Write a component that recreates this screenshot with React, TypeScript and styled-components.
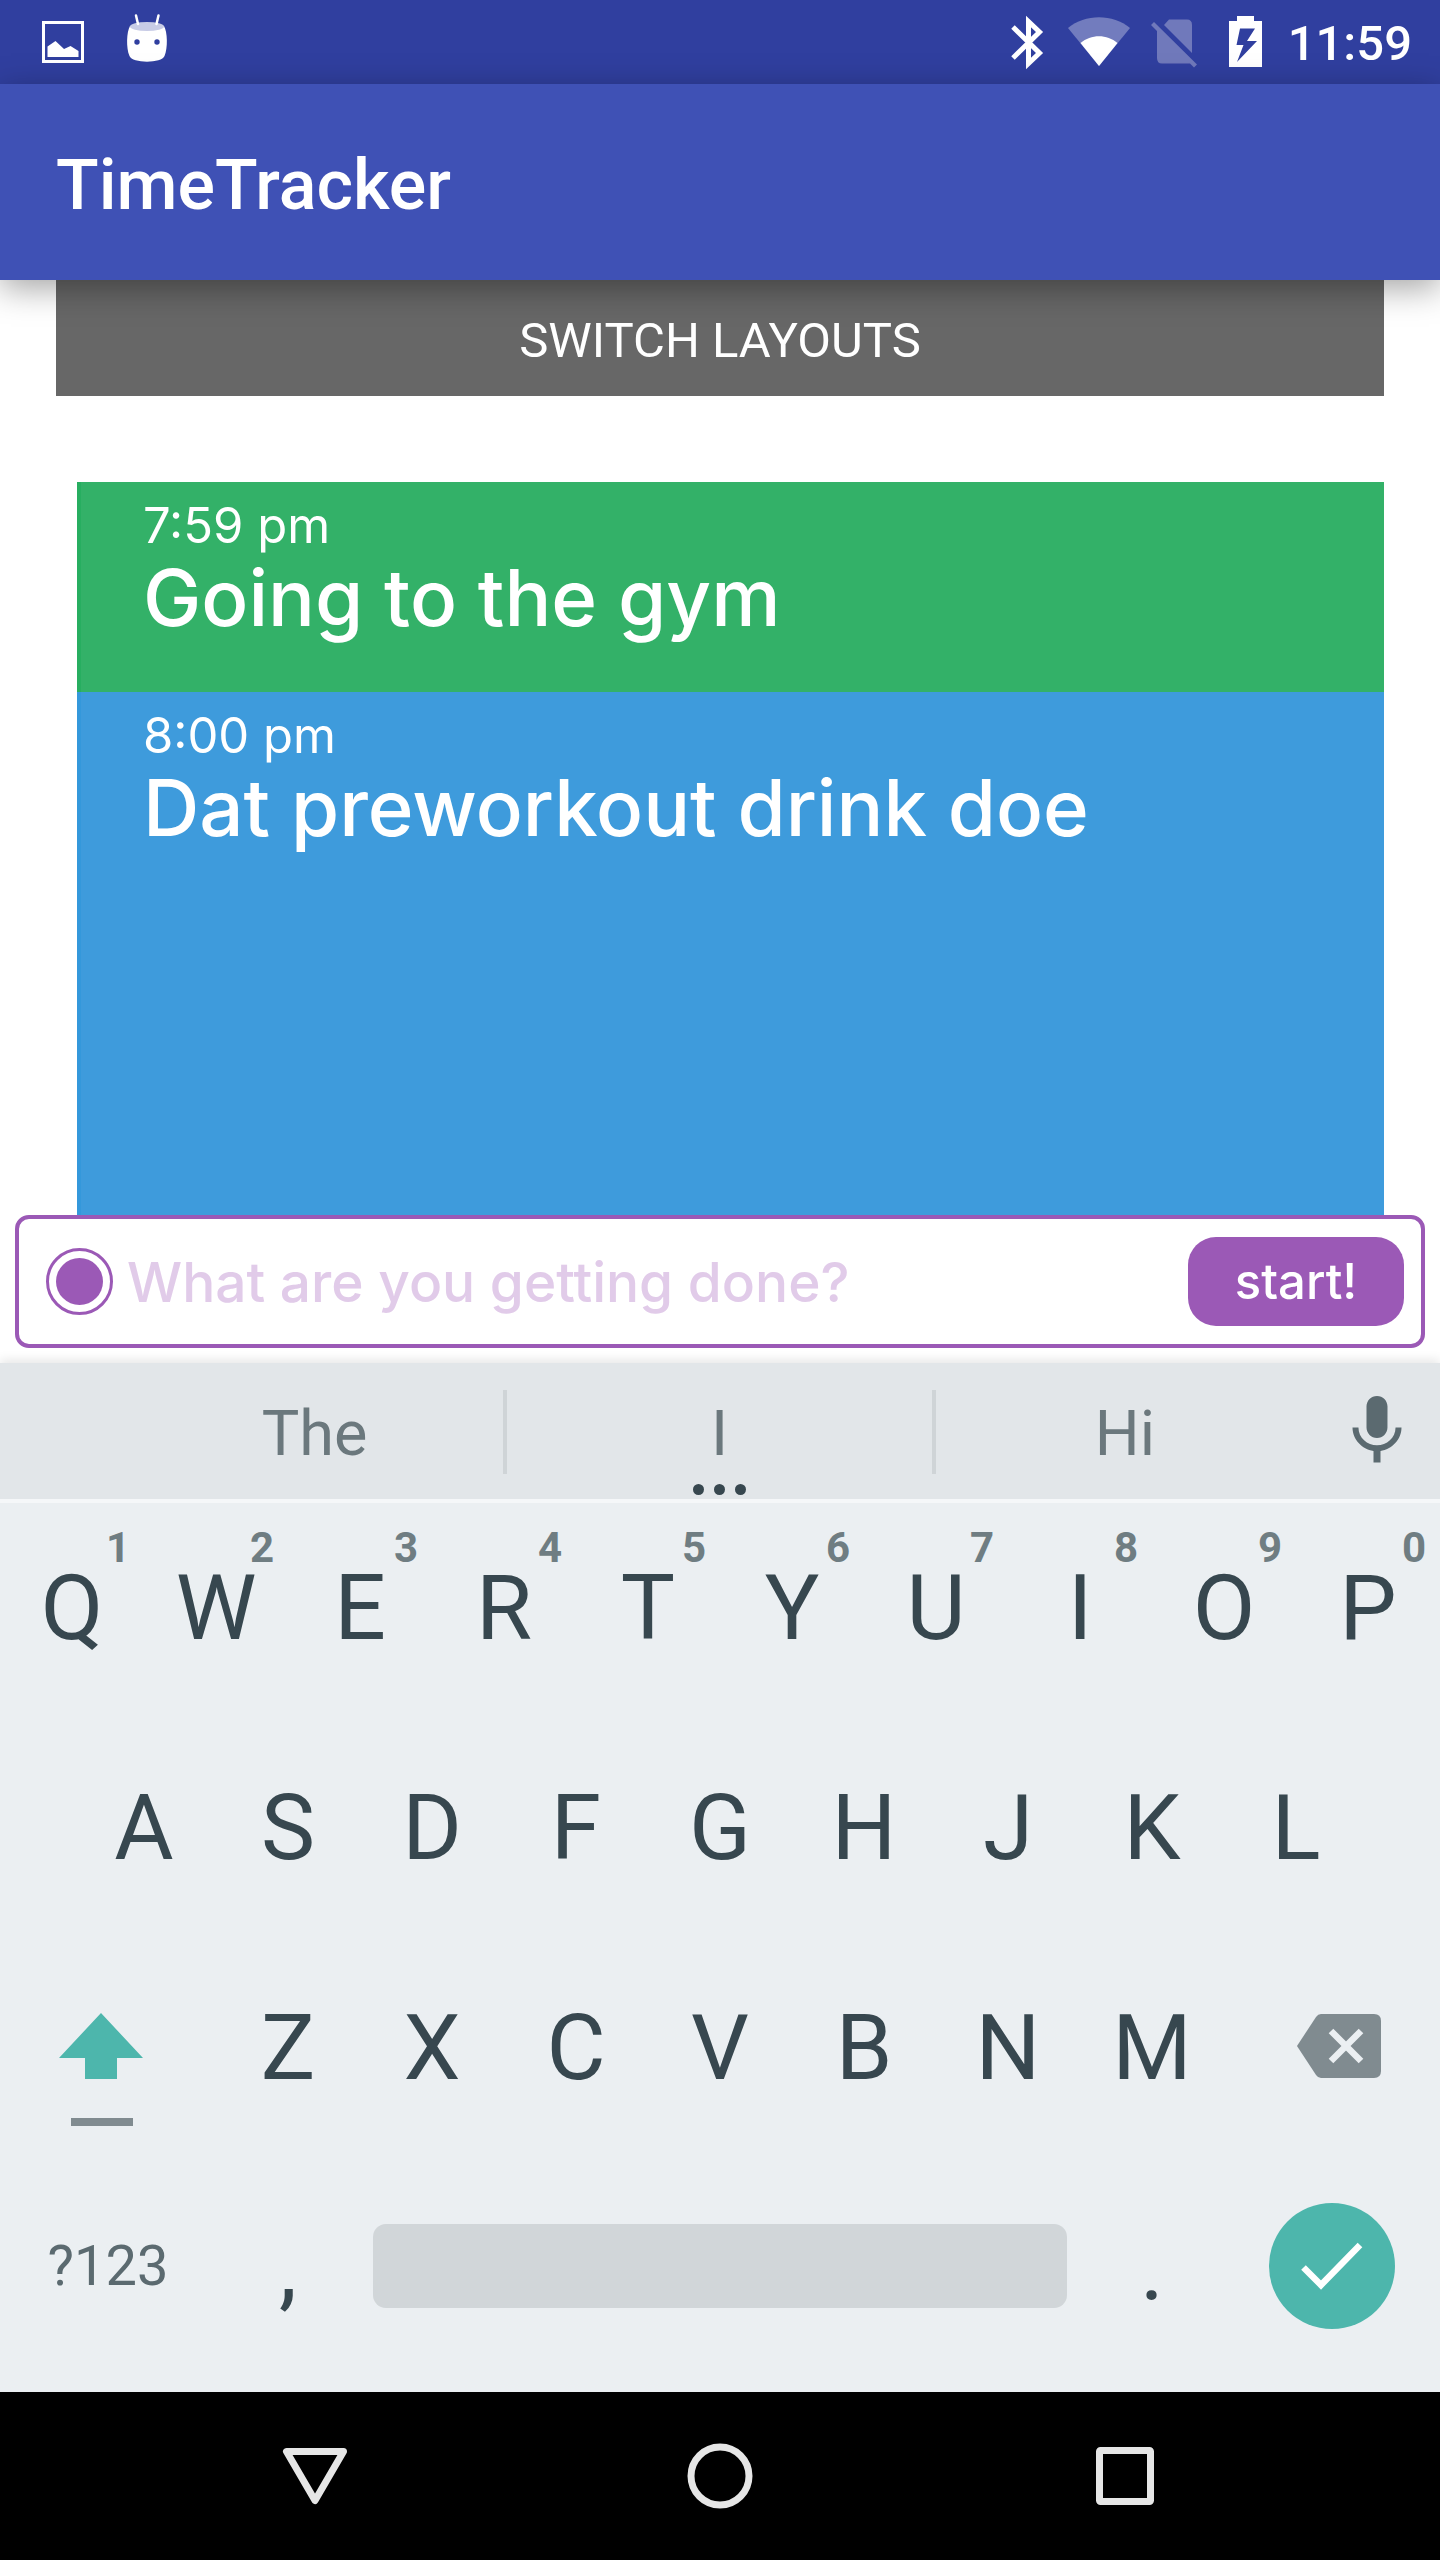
import React from "react";
import styled, { createGlobalStyle } from "styled-components";

const GlobalStyle = createGlobalStyle`
  *, *::before, *::after { box-sizing: border-box; }
  body { margin: 0; background: #fff; }
  button, input { font: inherit; border: 0; margin: 0; padding: 0; background: none; }
  button { cursor: pointer; }
  svg { display: block; flex: none; }
`;

const Screen = styled.div`
  display: flex;
  flex-direction: column;
  min-height: 100vh;
  overflow: hidden;
  font-family: Roboto, sans-serif;
`;

const StatusBar = styled.div`
  display: flex;
  justify-content: space-between;
  height: 84px;
  padding: 0 28px 0 21px;
  background: #303f9f;
  color: #fff;
`;

const StatusGroup = styled.div`
  display: flex;
  align-items: center;
`;

const Clock = styled.time`
  padding-top: 4px;
  margin-left: 6px;
  font-size: 49px;
  font-weight: 500;
  line-height: 80px;
`;

const AppBar = styled.header`
  position: relative;
  z-index: 1;
  display: flex;
  align-items: center;
  height: 196px;
  padding: 0 56px;
  background: #3f51b5;
  box-shadow: 0 8px 32px rgba(0, 0, 0, 0.36);
`;

const AppTitle = styled.h1`
  margin: 0;
  padding-top: 6px;
  color: #fff;
  font-size: 70px;
  font-weight: 500;
  line-height: 84px;
`;

const Content = styled.main`
  display: flex;
  flex: 1;
  flex-direction: column;
  padding: 0 56px;
`;

const SwitchButton = styled.button`
  height: 116px;
  padding-top: 4px;
  background: #676767;
  color: #fff;
  font-size: 49px;
  text-transform: uppercase;
`;

const Timeline = styled.ol`
  display: flex;
  flex: 1;
  flex-direction: column;
  margin: 86px 0 0 21px;
  padding: 0;
  list-style: none;
  font-family: Inter, sans-serif;
  color: #fff;
`;

const Entry = styled.li<{ $fill: string; $edge: string; $grow?: boolean }>`
  flex: ${(p) => (p.$grow ? 1 : "none")};
  padding: 16px 62px 50px;
  border-left: 4px solid ${(p) => p.$edge};
  background: ${(p) => p.$fill};
`;

const EntryTime = styled.time`
  display: block;
  font-size: 49px;
  font-weight: 400;
  line-height: 56px;
`;

const EntryTitle = styled.h2`
  margin: 0;
  font-size: 78px;
  font-weight: 500;
  line-height: 88px;
`;

const Composer = styled.form`
  display: flex;
  align-items: center;
  height: 133px;
  margin: 0 15px 15px;
  padding: 0 17px 0 27px;
  border: 4px solid #9b59b6;
  border-radius: 14px;
  background: #fff;
  font-family: Inter, sans-serif;
`;

const ColorButton = styled.button`
  flex: none;
  width: 67px;
  height: 67px;
  padding: 7px;
  border: 3px solid #9b59b6;
  border-radius: 50%;
  background: #9b59b6 content-box;
`;

const TaskInput = styled.input`
  flex: 1;
  min-width: 0;
  height: 100px;
  padding-left: 14px;
  outline: 0;
  color: #9b59b6;
  font-size: 55px;
  font-weight: 500;
  &::placeholder {
    color: #e1cbe9;
    opacity: 1;
  }
`;

const StartButton = styled.button`
  flex: none;
  width: 216px;
  height: 89px;
  border-radius: 28px;
  background: #9b59b6;
  color: #fff;
  font-size: 49px;
  font-weight: 500;
`;

const Keyboard = styled.section`
  background: #ebeff2;
  box-shadow: 0 -3px 10px rgba(0, 0, 0, 0.1);
`;

const SuggestionStrip = styled.div`
  display: grid;
  grid-template-columns: 126px 377fr 433fr 378fr 126px;
  height: 140px;
  border-bottom: 4px solid #f5f7f9;
  background: #e2e6e9;
`;

const Suggestion = styled.button<{ $middle?: boolean }>`
  position: relative;
  margin: 27px 0 25px;
  padding-top: 4px;
  border: solid #cfd4d7;
  border-width: ${(p) => (p.$middle ? "0 4px" : "0")};
  color: #6b787d;
  font-size: 63px;
  line-height: 80px;
`;

const MoreDots = styled.span`
  position: absolute;
  top: 94px;
  left: 0;
  right: 0;
  display: flex;
  justify-content: center;
  gap: 10px;
`;

const Dot = styled.span`
  width: 11px;
  height: 11px;
  border-radius: 50%;
  background: #37474f;
`;

const MicButton = styled.button`
  grid-column: 5;
  display: flex;
  align-items: center;
  justify-content: center;
  color: #5b6a70;
`;

const Keys = styled.div`
  display: flex;
  flex-direction: column;
  gap: 14px;
  padding-bottom: 23px;
`;

const KeyRow = styled.div<{ $inset?: boolean }>`
  display: grid;
  grid-template-columns: repeat(${(p) => (p.$inset ? 18 : 20)}, minmax(0, 1fr));
  height: 206px;
  padding: 0 ${(p) => (p.$inset ? "5%" : "0")};
`;

const Key = styled.button`
  position: relative;
  grid-column: span 2;
  padding-top: 4px;
  color: #37474f;
  font-size: 91px;
`;

const KeyHint = styled.span`
  position: absolute;
  top: 20px;
  right: 14px;
  color: #6f7d82;
  font-size: 42px;
  font-weight: 700;
  line-height: 50px;
`;

const WideKey = styled.button<{ $side?: "left" | "right" }>`
  display: flex;
  grid-column: span 3;
  align-items: center;
  justify-content: center;
  padding-right: ${(p) => (p.$side === "left" ? "14px" : "0")};
  padding-left: ${(p) => (p.$side === "right" ? "14px" : "0")};
  color: #5b6a70;
  font-size: 56px;
`;

const SpaceKey = styled.button`
  grid-column: span 10;
  padding: 0 13px;
`;

const SpaceBar = styled.span`
  display: block;
  height: 84px;
  border-radius: 13px;
  background: #d1d6d9;
`;

const DoneDisc = styled.span`
  display: flex;
  width: 126px;
  height: 126px;
  border-radius: 50%;
  background: #4db6ac;
`;

const NavBar = styled.nav`
  display: flex;
  justify-content: center;
  height: 168px;
  background: #000;
`;

const NavButton = styled.button`
  display: flex;
  flex: 0 1 405px;
  align-items: center;
  justify-content: center;
`;

const entries = [
  { time: "7:59 pm", title: "Going to the gym", fill: "#33b168", edge: "#27ae60" },
  { time: "8:00 pm", title: "Dat preworkout drink doe", fill: "#3e9bdc", edge: "#3498db", grow: true },
];

const topRow = "QWERTYUIOP".split("");
const middleRow = "ASDFGHJKL".split("");
const bottomRow = "ZXCVBNM".split("");

const PictureIcon = () => (
  <svg width="84" height="84" viewBox="21 0 84 84" aria-hidden="true">
    <rect x="43.5" y="22.500" width="39" height="39" fill="none" stroke="#fff" strokeWidth="3" />
    <path d="M47.500 57V46.500L55.500 41 64 49 70.500 46 78.500 51V57Z" fill="#fff" />
  </svg>
);

const DroidIcon = () => (
  <svg width="84" height="84" viewBox="105 0 84 84" aria-hidden="true">
    <path d="M130 26C126.500 32 126 48 129.500 56 132 63.500 162 63.500 164.500 56 168 48 167.500 32 164 26Z" fill="#fff" />
    <ellipse cx="147" cy="26.500" rx="17" ry="4.500" fill="#c8cce6" />
    <path d="M136 15.500 138 24M158.500 15.500 156.500 24" stroke="#fff" strokeWidth="2.500" strokeLinecap="round" />
    <circle cx="137" cy="42" r="2.700" fill="#303f9f" />
    <circle cx="157" cy="42" r="2.700" fill="#303f9f" />
  </svg>
);

const BluetoothIcon = () => (
  <svg width="73" height="84" viewBox="990 0 73 84" aria-hidden="true">
    <path d="M1013 27 1039.500 53 1028.500 63.500V21.500L1039.500 32 1013 58" fill="none" stroke="#fff" strokeWidth="5" />
  </svg>
);

const WifiIcon = () => (
  <svg width="73" height="84" viewBox="1063 0 73 84" aria-hidden="true">
    <path d="M1099 66 1068 28C1085 13.500 1113 13.500 1130 28Z" fill="#fff" opacity="0.32" />
    <path d="M1099 66 1080.500 43C1091 34 1107 34 1117.500 43Z" fill="#fff" />
  </svg>
);

const NoSimIcon = () => (
  <svg width="73" height="84" viewBox="1136 0 73 84" aria-hidden="true">
    <g fill="#7079bb">
      <path d="M1164 25 1169 19.500H1187Q1192 19.500 1192 25V53Z" />
      <path d="M1151 25 1154 22 1197 64.500 1194 67.500 1190 63.500H1162Q1157 63.500 1157 58V31Z" />
    </g>
  </svg>
);

const BatteryIcon = () => (
  <svg width="73" height="84" viewBox="1209 0 73 84" aria-hidden="true">
    <path d="M1237 16H1254V21H1262V67H1229V21H1237Z" fill="#fff" />
    <path d="M1240 28.500H1255L1247 41H1257L1237 62 1243.500 45H1236.500Z" fill="#303f9f" />
  </svg>
);

const MicIcon = () => (
  <svg width="84" height="84" viewBox="0 0 24 24" fill="currentColor" aria-hidden="true">
    <path d="M12 14c1.660 0 2.990-1.340 2.990-3L15 5c0-1.660-1.340-3-3-3S9 3.340 9 5v6c0 1.660 1.340 3 3 3zm5.300-3c0 3-2.540 5.100-5.300 5.100S6.700 14 6.700 11H5c0 3.410 2.720 6.230 6 6.720V21h2v-3.280c3.280-.480 6-3.300 6-6.720h-1.700z" />
  </svg>
);

const ShiftIcon = () => (
  <svg width="84" height="168" viewBox="59 1962 84 168" aria-hidden="true">
    <path d="M101 2013 143 2058H117V2079H85V2058H59Z" fill="#4db6ac" />
    <rect x="71" y="2118" width="62" height="8" fill="#808b90" />
  </svg>
);

const DeleteIcon = () => (
  <svg width="84" height="64" viewBox="0 0 84 64" aria-hidden="true">
    <path d="M0 32 19 3Q21 0 24 0H77Q84 0 84 7V57Q84 64 77 64H24Q21 64 19 61Z" fill="#808b90" />
    <path d="M34 17 64 47M64 17 34 47" stroke="#ebeff2" strokeWidth="6.500" />
  </svg>
);

const CheckIcon = () => (
  <svg width="126" height="126" viewBox="0 0 126 126" aria-hidden="true">
    <path d="M34.500 64.500 52 82 91 42" fill="none" stroke="#fff" strokeWidth="6.500" />
  </svg>
);

export default function App() {
  return (
    <Screen>
      <GlobalStyle />
      <StatusBar>
        <StatusGroup>
          <PictureIcon />
          <DroidIcon />
        </StatusGroup>
        <StatusGroup>
          <BluetoothIcon />
          <WifiIcon />
          <NoSimIcon />
          <BatteryIcon />
          <Clock>11:59</Clock>
        </StatusGroup>
      </StatusBar>

      <AppBar>
        <AppTitle>TimeTracker</AppTitle>
      </AppBar>

      <Content>
        <SwitchButton type="button">Switch layouts</SwitchButton>
        <Timeline>
          {entries.map((e) => (
            <Entry key={e.time} $fill={e.fill} $edge={e.edge} $grow={e.grow}>
              <EntryTime>{e.time}</EntryTime>
              <EntryTitle>{e.title}</EntryTitle>
            </Entry>
          ))}
        </Timeline>
      </Content>

      <Composer onSubmit={(e) => e.preventDefault()}>
        <ColorButton type="button" aria-label="Choose colour" />
        <TaskInput type="text" aria-label="Task" placeholder="What are you getting done?" />
        <StartButton type="submit">start!</StartButton>
      </Composer>

      <Keyboard aria-label="Keyboard">
        <SuggestionStrip>
          <span />
          <Suggestion type="button">The</Suggestion>
          <Suggestion type="button" $middle>
            I
            <MoreDots>
              <Dot />
              <Dot />
              <Dot />
            </MoreDots>
          </Suggestion>
          <Suggestion type="button">Hi</Suggestion>
          <MicButton type="button" aria-label="Voice input">
            <MicIcon />
          </MicButton>
        </SuggestionStrip>
        <Keys>
          <KeyRow>
            {topRow.map((k, i) => (
              <Key key={k} type="button">
                {k}
                <KeyHint>{(i + 1) % 10}</KeyHint>
              </Key>
            ))}
          </KeyRow>
          <KeyRow $inset>
            {middleRow.map((k) => (
              <Key key={k} type="button">{k}</Key>
            ))}
          </KeyRow>
          <KeyRow>
            <WideKey type="button" $side="left" aria-label="Shift">
              <ShiftIcon />
            </WideKey>
            {bottomRow.map((k) => (
              <Key key={k} type="button">{k}</Key>
            ))}
            <WideKey type="button" $side="right" aria-label="Delete">
              <DeleteIcon />
            </WideKey>
          </KeyRow>
          <KeyRow>
            <WideKey type="button">?123</WideKey>
            <Key type="button">,</Key>
            <SpaceKey type="button" aria-label="Space">
              <SpaceBar />
            </SpaceKey>
            <Key type="button">.</Key>
            <WideKey type="button" aria-label="Done">
              <DoneDisc>
                <CheckIcon />
              </DoneDisc>
            </WideKey>
          </KeyRow>
        </Keys>
      </Keyboard>

      <NavBar>
        <NavButton type="button" aria-label="Back">
          <svg width="66" height="66" viewBox="0 0 66 66" aria-hidden="true">
            <path d="M4.500 8.500H61.500L33 57.500Z" fill="none" stroke="#e6e6e6" strokeWidth="7" strokeLinejoin="round" />
          </svg>
        </NavButton>
        <NavButton type="button" aria-label="Home">
          <svg width="66" height="66" viewBox="0 0 66 66" aria-hidden="true">
            <circle cx="33" cy="33" r="29" fill="none" stroke="#e6e6e6" strokeWidth="7" />
          </svg>
        </NavButton>
        <NavButton type="button" aria-label="Recent apps">
          <svg width="66" height="66" viewBox="0 0 66 66" aria-hidden="true">
            <rect x="7.500" y="7.500" width="51" height="51" rx="1" fill="none" stroke="#e6e6e6" strokeWidth="7" strokeLinejoin="round" />
          </svg>
        </NavButton>
      </NavBar>
    </Screen>
  );
}
